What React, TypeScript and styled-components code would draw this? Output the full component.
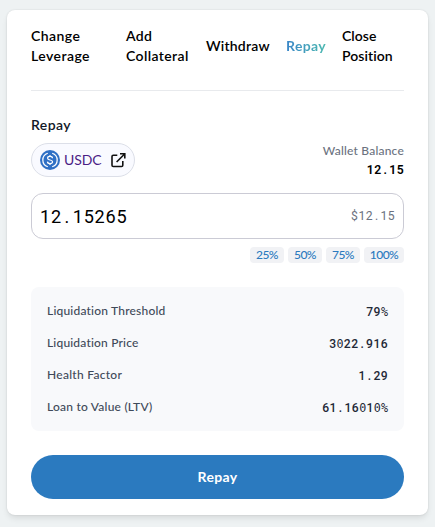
import React from "react";
import styled, { createGlobalStyle } from "styled-components";

const GlobalStyle = createGlobalStyle`
  *, *::before, *::after { box-sizing: border-box; }
  body {
    margin: 0;
    background: #eef2f3;
    font-family: Lato, "Open Sans", sans-serif;
    color: #111827;
  }
  button, input { font: inherit; border: 0; background: none; padding: 0; margin: 0; }
`;

const Page = styled.main`
  height: 527px;
  padding: 10px 7px 12px;
`;

const Card = styled.section`
  height: 505px;
  padding: 16px 24px;
  background: #fff;
  border-radius: 8px;
  box-shadow: 0 4px 6px -1px rgba(0, 0, 0, 0.1), 0 0 2px rgba(0, 0, 0, 0.12);
`;

const Tabs = styled.nav`
  display: grid;
  grid-template-columns: 95px 80px 80px 56px 1fr;
  align-items: center;
  height: 65px;
  padding-bottom: 24px;
  border-bottom: 1px solid #e8eaed;
`;

const Tab = styled.button<{ $active?: boolean; $track: number }>`
  justify-self: start;
  text-align: left;
  white-space: pre-line;
  font-size: 14px;
  line-height: 20px;
  font-weight: ${(p) => (p.$active ? 700 : 600)};
  letter-spacing: ${(p) => p.$track}px;
  color: ${(p) => (p.$active ? "transparent" : "#000")};
  background: ${(p) => (p.$active ? "linear-gradient(90deg, #3a86c8, #4cb9b0)" : "none")};
  background-clip: text;
`;

const Heading = styled.h2`
  margin: 24px 0 8px;
  font-size: 14px;
  line-height: 20px;
  font-weight: 600;
  letter-spacing: 0.4px;
`;

const AssetRow = styled.div`
  display: flex;
  justify-content: space-between;
  height: 34px;
`;

const Asset = styled.a`
  display: flex;
  align-items: center;
  width: 104px;
  height: 34px;
  padding: 0 8px;
  border: 1px solid #dcdfe8;
  border-radius: 17px;
  background: #f9faff;
  color: #4b1d85;
  font-size: 14px;
  text-decoration: none;
  svg { flex: none; }
`;

const AssetName = styled.span`
  width: 46px;
  margin-left: 4px;
  padding-bottom: 2px;
  letter-spacing: -0.1px;
`;

const Balance = styled.div`
  display: flex;
  flex-direction: column;
  align-items: flex-end;
`;

const BalanceLabel = styled.span`
  font-size: 12px;
  line-height: 16px;
  letter-spacing: 0.2px;
  font-weight: 500;
  color: #6b7280;
`;

const Mono = styled.span<{ $size: number; $weight?: number; $color?: string }>`
  font-family: Roboto, sans-serif;
  font-size: ${(p) => p.$size}px;
  font-weight: ${(p) => p.$weight ?? 400};
  letter-spacing: 0.042em;
  margin-right: -0.02em;
  color: ${(p) => p.$color ?? "#111827"};
`;

const Point = styled.span`
  padding: 0 0.15em 0 0.148em;
`;

const MonoGlyph = styled.span`
  font-family: "DejaVu Sans Mono", monospace;
  font-size: 0.97em;
  letter-spacing: 0.015em;
  line-height: 1;
`;

function Figure({ value, ...style }: { value: string; $size: number; $weight?: number; $color?: string }) {
  return (
    <Mono {...style}>
      {value.split(/([.%0])/).map((part, i) =>
        part === "." ? (
          <Point key={i}>.</Point>
        ) : part === "%" || part === "0" ? (
          <MonoGlyph key={i}>{part}</MonoGlyph>
        ) : (
          part
        )
      )}
    </Mono>
  );
}

const BalanceValue = styled.div`
  line-height: 17px;
  height: 17px;
`;

const AmountField = styled.div`
  display: flex;
  align-items: center;
  justify-content: space-between;
  height: 46px;
  margin-top: 16px;
  padding: 0 8px;
  border: 1px solid #cbcbd5;
  border-radius: 12px;
`;

const Chips = styled.div`
  display: flex;
  justify-content: flex-end;
  gap: 4px;
  margin-top: 8px;
`;

const Chip = styled.button<{ $wide?: boolean }>`
  width: ${(p) => (p.$wide ? 40 : 34)}px;
  height: 16px;
  border-radius: 4px;
  background: #f1f2f5;
  color: #2b7abf;
  font-size: 12px;
  line-height: 16px;
  font-weight: 500;
  letter-spacing: -0.5px;
`;

const Stats = styled.dl`
  display: grid;
  gap: 16px;
  height: 144px;
  margin: 24px 0;
  padding: 16px;
  border-radius: 8px;
  background: #f8f9fb;
`;

const Stat = styled.div`
  display: flex;
  align-items: center;
  justify-content: space-between;
  height: 16px;
  dd { margin: 0; line-height: 16px; }
`;

const StatLabel = styled.dt<{ $track: number }>`
  font-size: 12px;
  font-weight: 500;
  line-height: 16px;
  color: #3f4a59;
  letter-spacing: ${(p) => p.$track}px;
`;

const Submit = styled.button`
  display: block;
  width: 100%;
  height: 44px;
  padding-bottom: 1px;
  border-radius: 22px;
  background: #2b7abf;
  color: #fff;
  font-size: 14px;
  font-weight: 700;
  letter-spacing: 0.35px;
`;

const UsdcIcon = () => (
  <svg width="20" height="20" viewBox="0 0 32 32" fill="none">
    <circle cx="16" cy="16" r="16" fill="#2f70c5" />
    <path
      d="M12.5 5.2a11.3 11.3 0 0 0 0 21.6M19.5 5.2a11.3 11.3 0 0 1 0 21.6"
      stroke="#fff"
      strokeWidth="2"
    />
    <path
      d="M20 13.2c-.2-1.8-1.7-2.9-4-2.9-2.2 0-3.8 1.1-3.8 2.9 0 4 7.9 1.6 7.9 5.6 0 1.8-1.7 2.9-4.1 2.9-2.5 0-4-1.2-4.1-3.1M16 8v2.3M16 21.7V24"
      stroke="#fff"
      strokeWidth="2"
    />
  </svg>
);

const OpenIcon = () => (
  <svg width="16" height="16" viewBox="0 0 16 16" fill="none" stroke="#111" strokeWidth="1.6">
    <path d="M7.3 3.2H3.3Q2 3.2 2 4.5v8.7q0 1.3 1.3 1.3h8.2q1.3 0 1.3-1.3V9" />
    <path d="M10 1.8h4.8v4.8M14.6 2 6.6 10" />
  </svg>
);

const tabs = [
  { label: "Change\nLeverage", track: 0.45 },
  { label: "Add\nCollateral", track: 0.38 },
  { label: "Withdraw", track: 0.22 },
  { label: "Repay", track: 0.35, active: true },
  { label: "Close\nPosition", track: 0.05 },
];

const stats = [
  { label: "Liquidation Threshold", value: "79%", track: 0.2 },
  { label: "Liquidation Price", value: "3022.916", track: 0.18 },
  { label: "Health Factor", value: "1.29", track: 0.28 },
  { label: "Loan to Value (LTV)", value: "61.16010%", track: 0.22 },
];

export default function App() {
  return (
    <>
      <GlobalStyle />
      <Page>
        <Card>
          <Tabs>
            {tabs.map((t) => (
              <Tab key={t.label} $active={t.active} $track={t.track}>{t.label}</Tab>
            ))}
          </Tabs>
          <Heading>Repay</Heading>
          <AssetRow>
            <Asset href="#">
              <UsdcIcon />
              <AssetName>USDC</AssetName>
              <OpenIcon />
            </Asset>
            <Balance>
              <BalanceLabel>Wallet Balance</BalanceLabel>
              <BalanceValue><Figure value="12.15" $size={12.2} $weight={600} $color="#000" /></BalanceValue>
            </Balance>
          </AssetRow>
          <AmountField>
            <Figure value="12.15265" $size={18.1} $color="#000" />
            <Figure value="$12.15" $size={12.2} $color="#6b7280" />
          </AmountField>
          <Chips>
            {["25%", "50%", "75%", "100%"].map((c) => (
              <Chip key={c} $wide={c === "100%"}>{c}</Chip>
            ))}
          </Chips>
          <Stats>
            {stats.map((s) => (
              <Stat key={s.label}>
                <StatLabel $track={s.track}>{s.label}</StatLabel>
                <dd><Figure value={s.value} $size={12.1} $weight={500} $color="#1f2937" /></dd>
              </Stat>
            ))}
          </Stats>
          <Submit>Repay</Submit>
        </Card>
      </Page>
    </>
  );
}
